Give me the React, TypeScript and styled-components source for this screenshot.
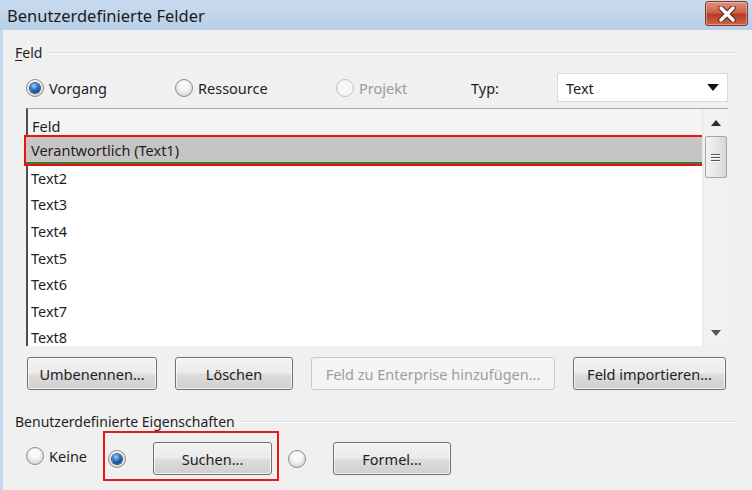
import React from 'react';
import styled, { createGlobalStyle, css } from 'styled-components';

const GlobalStyle = createGlobalStyle`
  html, body {
    margin: 0;
    padding: 0;
    background: #f0f0f0;
  }
  body {
    font-family: "Noto Sans", "Open Sans", sans-serif;
    font-size: 14px;
    color: #1e1e1e;
  }
`;

const Window = styled.div`
  width: 752px;
  height: 490px;
  display: flex;
  flex-direction: column;
  overflow: hidden;
  background: #f0f0f0;
`;

const TitleBar = styled.div`
  height: 30px;
  flex: none;
  display: flex;
  align-items: flex-start;
  justify-content: space-between;
  background: linear-gradient(#c9dbf0, #b9cee7);
`;

const Title = styled.div`
  padding: 4px 0 0 7px;
  font-size: 16.5px;
  color: #1a1a1a;
`;

const CloseButton = styled.div`
  width: 43px;
  height: 25px;
  margin: 1px 4px 0 0;
  box-sizing: border-box;
  border: 1px solid #7a3a2c;
  border-radius: 3px;
  background: linear-gradient(#e0917c 0%, #cf6249 45%, #b83a22 55%, #cc664a 100%);
  box-shadow: inset 0 0 0 1px rgba(255, 255, 255, 0.35);
  display: flex;
  align-items: center;
  justify-content: center;
`;

const Body = styled.div`
  flex: 1;
  display: flex;
  flex-direction: column;
  border-left: 3px solid #c4d7ee;
  padding-left: 12px;
  padding-right: 14px;
`;

const GroupHeader = styled.div<{ $top: number; $line: string }>`
  display: flex;
  align-items: center;
  gap: 6px;
  height: 18px;
  margin-top: ${(p) => p.$top}px;
  &::after {
    content: '';
    flex: 1;
    height: 1px;
    background: ${(p) => p.$line};
    box-shadow: 0 1px 0 #fbfbfb;
  }
`;

const Underline = styled.span`
  text-decoration: underline;
  text-underline-offset: 2px;
`;

const RadioRow = styled.div`
  display: flex;
  align-items: center;
  height: 29px;
  margin-top: 12px;
  padding-left: 11px;
`;

const Option = styled.label<{ $width: number; $disabled?: boolean }>`
  display: flex;
  align-items: center;
  gap: 5px;
  width: ${(p) => p.$width}px;
  flex: none;
  font-size: 14.5px;
  color: ${(p) => (p.$disabled ? '#9a9a9a' : '#1e1e1e')};
`;

const Radio = styled.span<{ $checked?: boolean; $disabled?: boolean }>`
  width: 18px;
  height: 18px;
  flex: none;
  box-sizing: border-box;
  border-radius: 50%;
  border: 1px solid ${(p) => (p.$disabled ? '#c2c2c2' : '#8a8c8e')};
  background: ${(p) =>
    p.$disabled
      ? 'radial-gradient(circle at 50% 50%, #f6f6f6 55%, #e6e6e6 100%)'
      : 'radial-gradient(circle at 50% 35%, #fafafa 30%, #dedede 70%, #c9c9c9 100%)'};
  display: flex;
  align-items: center;
  justify-content: center;
  ${(p) =>
    p.$checked &&
    css`
      &::after {
        content: '';
        width: 10px;
        height: 10px;
        border-radius: 50%;
        background: radial-gradient(circle at 40% 30%, #a9d4fb 0%, #3b7fd0 35%, #0d3f8a 75%, #0a2f6a 100%);
        box-shadow: 0 0 0 1px #2a4f80;
      }
    `}
`;

const TypLabel = styled.span`
  width: 86px;
  flex: none;
  font-size: 14.5px;
`;

const Select = styled.div`
  width: 171px;
  height: 29px;
  box-sizing: border-box;
  background: #fff;
  border: 1px solid #d9d9d9;
  display: flex;
  align-items: center;
  justify-content: space-between;
  padding: 0 8px 0 8px;
  font-size: 14.5px;
`;

const ListBox = styled.div`
  margin: 6px 10px 0 11px;
  height: 238px;
  display: flex;
  box-sizing: border-box;
  border-top: 1px solid #a9a9a9;
  border-left: 2px solid #4e4e4e;
  background: #fff;
`;

const Rows = styled.div`
  flex: 1;
  display: flex;
  flex-direction: column;
  min-width: 0;
`;

const HeaderRow = styled.div`
  height: 28px;
  flex: none;
  box-sizing: border-box;
  padding: 8px 0 0 4px;
  font-size: 14.5px;
  line-height: 18px;
  background: #f4f4f4;
`;

const Row = styled.div<{ $selected?: boolean }>`
  height: 26.6px;
  flex: none;
  box-sizing: border-box;
  display: flex;
  align-items: center;
  padding: 1px 0 0 3px;
  font-size: 14.5px;
  ${(p) =>
    p.$selected &&
    css`
      background: #c6c4c4;
      border-bottom: 2px solid #3a7a38;
      outline: 2px solid #ee1111;
      margin: 0 -1px 0 -2px;
      padding: 1px 0 0 5px;
      height: 27px;
    `}
`;

const ScrollBar = styled.div`
  width: 25px;
  flex: none;
  background: #f1f1f1;
  border-left: 1px solid #e6e6e6;
  display: flex;
  flex-direction: column;
  align-items: center;
`;

const ScrollArrow = styled.div`
  height: 27px;
  display: flex;
  align-items: center;
  justify-content: center;
`;

const Thumb = styled.div`
  width: 22px;
  height: 42px;
  box-sizing: border-box;
  border: 1px solid #a5a5a5;
  border-radius: 2px;
  background: linear-gradient(90deg, #f3f3f3, #e4e4e4 60%, #d6d6d6);
  display: flex;
  flex-direction: column;
  align-items: center;
  justify-content: center;
  gap: 2px;
`;

const Grip = styled.span`
  width: 9px;
  height: 1px;
  background: #555;
  box-shadow: 0 1px 0 #fff;
`;

const ScrollSpacer = styled.div`
  flex: 1;
`;

const ButtonRow = styled.div`
  display: flex;
  gap: 18px;
  margin-top: 11px;
  padding-left: 12px;
`;

const Button = styled.div<{ $width: number; $disabled?: boolean }>`
  width: ${(p) => p.$width}px;
  height: 33px;
  flex: none;
  box-sizing: border-box;
  border-radius: 3px;
  display: flex;
  align-items: center;
  justify-content: center;
  padding-top: 1px;
  font-size: 14.5px;
  ${(p) =>
    p.$disabled
      ? css`
          border: 1px solid #c4c8cb;
          background: #f4f4f4;
          color: #9d9d9d;
        `
      : css`
          border: 1px solid #707070;
          background: linear-gradient(#f3f3f3 0%, #ebebeb 48%, #dddddd 52%, #cfcfcf 100%);
          box-shadow: inset 0 0 0 1px rgba(255, 255, 255, 0.7);
          color: #1e1e1e;
        `}
`;

const BottomRow = styled.div`
  display: flex;
  align-items: center;
  margin-top: 1px;
  padding-left: 11px;
  height: 50px;
`;

const Highlight = styled.div`
  height: 50px;
  box-sizing: border-box;
  border: 2px solid #e81818;
  display: flex;
  align-items: center;
  padding: 5px 5px 0 3px;
  gap: 27px;
  margin: 0 9px 0 16px;
`;

const Pair = styled.div`
  display: flex;
  align-items: center;
  gap: 27px;
  padding-top: 5px;
`;

const fields = ['Text2', 'Text3', 'Text4', 'Text5', 'Text6', 'Text7', 'Text8'];

const CloseIcon = () => (
  <svg width="20" height="16" viewBox="0 0 20 16">
    <path d="M4 2 L16 14 M16 2 L4 14" stroke="#5b2a20" strokeWidth="5.5" strokeLinecap="round" />
    <path d="M4 2 L16 14 M16 2 L4 14" stroke="#ffffff" strokeWidth="3.4" strokeLinecap="round" />
  </svg>
);

const Triangle = ({ dir, color, size }: { dir: 'up' | 'down'; color: string; size: number }) => (
  <svg width={size} height={size / 2 + 1} viewBox="0 0 10 6">
    {dir === 'up' ? (
      <path d="M0 6 L5 0 L10 6 Z" fill={color} />
    ) : (
      <path d="M0 0 L10 0 L5 6 Z" fill={color} />
    )}
  </svg>
);

export default function App() {
  return (
    <>
      <GlobalStyle />
      <Window>
        <TitleBar>
          <Title>Benutzerdefinierte Felder</Title>
          <CloseButton>
            <CloseIcon />
          </CloseButton>
        </TitleBar>
        <Body>
          <GroupHeader $top={13} $line="#d7dbdf">
            <span>
              <Underline>F</Underline>eld
            </span>
          </GroupHeader>
          <RadioRow>
            <Option $width={149}>
              <Radio $checked />
              Vorgang
            </Option>
            <Option $width={161}>
              <Radio />
              Ressource
            </Option>
            <Option $width={135} $disabled>
              <Radio $disabled />
              Projekt
            </Option>
            <TypLabel>Typ:</TypLabel>
            <Select>
              <span>Text</span>
              <Triangle dir="down" color="#111" size={12} />
            </Select>
          </RadioRow>
          <ListBox>
            <Rows>
              <HeaderRow>Feld</HeaderRow>
              <Row $selected>Verantwortlich (Text1)</Row>
              {fields.map((f) => (
                <Row key={f}>{f}</Row>
              ))}
            </Rows>
            <ScrollBar>
              <ScrollArrow>
                <Triangle dir="up" color="#2b2b2b" size={10} />
              </ScrollArrow>
              <Thumb>
                <Grip />
                <Grip />
                <Grip />
              </Thumb>
              <ScrollSpacer />
              <ScrollArrow>
                <Triangle dir="down" color="#555" size={10} />
              </ScrollArrow>
            </ScrollBar>
          </ListBox>
          <ButtonRow>
            <Button $width={130}>Umbenennen...</Button>
            <Button $width={118}>Löschen</Button>
            <Button $width={244} $disabled>
              Feld zu Enterprise hinzufügen...
            </Button>
            <Button $width={153}>Feld importieren...</Button>
          </ButtonRow>
          <GroupHeader $top={22} $line="#d3dfea">
            <span>Benutzerdefinierte Eigenschaften</span>
          </GroupHeader>
          <BottomRow>
            <Option $width={61}>
              <Radio />
              Keine
            </Option>
            <Highlight>
              <Radio $checked />
              <Button $width={119}>Suchen...</Button>
            </Highlight>
            <Pair>
              <Radio />
              <Button $width={118}>Formel...</Button>
            </Pair>
          </BottomRow>
        </Body>
      </Window>
    </>
  );
}
